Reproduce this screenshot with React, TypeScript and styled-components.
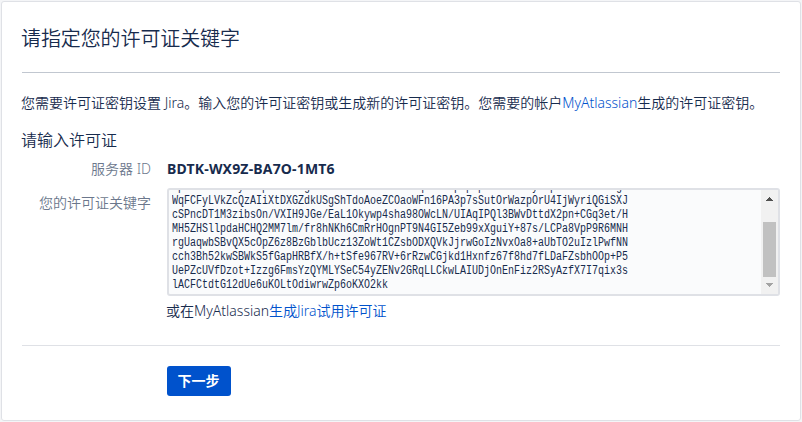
import React from 'react';
import styled, { createGlobalStyle } from 'styled-components';

const GlobalStyle = createGlobalStyle`
  * { box-sizing: border-box; }
  body {
    margin: 0;
    background: #f4f5f7;
    color: #172b4d;
    font: 14px/20px "Noto Sans", "Noto Sans CJK SC", sans-serif;
    overflow: hidden;
  }
`;

const Card = styled.main`
  width: 800px;
  height: 420px;
  margin: 1px;
  padding: 0 20px;
  background: #fff;
  border: 1px solid #dfe1e6;
  border-radius: 3px;
`;

const Header = styled.header`
  height: 71px;
  padding-top: 23px;
  border-bottom: 1px solid #c1c7d0;
`;

const Title = styled.h1`
  margin: 0 0 0 -1px;
  font-size: 20px;
  line-height: 28px;
  font-weight: 350;
  letter-spacing: -0.1px;
`;

const Intro = styled.p`
  margin: 20px 0 0 -1px;
  white-space: nowrap;
  font-weight: 350;
`;

const Subtitle = styled.h2`
  margin: 17px 0 0 -1px;
  font-size: 16px;
  line-height: 20px;
  font-weight: 350;
`;

const Field = styled.div<{ $gap: number }>`
  display: grid;
  grid-template-columns: 129px 613px;
  column-gap: 16px;
  margin-top: ${(p) => p.$gap}px;
`;

const Label = styled.label<{ $offset?: number }>`
  padding-top: ${(p) => p.$offset ?? 0}px;
  text-align: right;
  color: #6b778c;
  font-weight: 350;
`;

const ServerId = styled.strong`
  font-weight: 700;
  letter-spacing: 0.18px;
`;

const KeyBox = styled.div`
  display: flex;
  height: 108px;
  border: 2px solid #dfe1e6;
  border-radius: 3px;
  background: #fafbfc;
  overflow: hidden;
`;

const KeyViewport = styled.div`
  flex: 1;
  min-width: 0;
  height: 104px;
  padding-left: 3px;
  overflow: hidden;
`;

const KeyText = styled.pre`
  margin: -10px 0 0;
  font: 12px/14px "Liberation Mono", monospace;
  transform: scaleX(0.8332);
  transform-origin: 0 0;
`;

const Scrollbar = styled.div`
  display: flex;
  flex-direction: column;
  align-items: center;
  width: 17px;
  background: #f1f1f1;
`;

const Arrow = styled.svg`
  display: block;
  width: 17px;
  height: 17px;
`;

const Thumb = styled.div`
  width: 13px;
  height: 55px;
  margin: 15px 0 0;
  background: #c1c1c1;
`;

const Hint = styled.div`
  margin: 5px 0 0 -1px;
  font-weight: 350;
`;

const Link = styled.a`
  color: #0052cc;
  text-decoration: none;
`;

const Actions = styled.footer`
  margin-top: 24px;
  padding: 20px 0 0 145px;
  border-top: 1px solid #dfe1e6;
`;

const Button = styled.button`
  display: block;
  width: 64px;
  height: 30px;
  padding: 0 1px 0 0;
  border: 0;
  border-radius: 3px;
  background: #0052cc;
  color: #fff;
  font: 700 14px/30px "Noto Sans", "Noto Sans CJK SC", sans-serif;
`;

const licenseKey = [
  'SpKfR2mXHbTyc7WpLhDk1BgN4vZsE0uTxMrA3KdoRqTnWhBpFpUp5ZcLh8XkyVtpMs2HnrdDv6gw',
  'WqFCFyLVkZcQzAIiXtDXGZdkUSgShTdoAoeZCOaoWFn16PA3p7sSutOrWazpOrU4IjWyriQGiSXJ',
  'cSPncDT1M3zibsOn/VXIH9JGe/EaL1Okywp4sha98OWcLN/UIAqIPQl3BWvDttdX2pn+CGq3et/H',
  'MH5ZHSllpdaHCHQ2MM7lm/fr8hNKh6CmRrHOgnPT9N4GI5Zeb99xXguiY+87s/LCPa8VpP9R6MNH',
  'rgUaqwbSBvQX5cOpZ6z8BzGblbUcz13ZoWt1CZsbODXQVkJjrwGoIzNvxOa8+aUbTO2uIzlPwfNN',
  'cch3Bh52kwSBWkS5fGapHRBfX/h+tSfe967RV+6rRzwCGjkd1Hxnfz67f8hd7fLDaFZsbhOOp+P5',
  'UePZcUVfDzot+Izzg6FmsYzQYMLYSeC54yZENv2GRqLLCkwLAIUDjOnEnFiz2RSyAzfX7I7qix3s',
  'lACFCtdtG12dUe6uKOLtOdiwrwZp6oKXO2kk',
].join('\n');

export default function App() {
  return (
    <>
      <GlobalStyle />
      <Card>
        <Header>
          <Title>请指定您的许可证关键字</Title>
        </Header>
        <Intro>
          您需要许可证密钥设置 Jira。输入您的许可证密钥或生成新的许可证密钥。您需要的帐户
          <Link>MyAtlassian</Link>生成的许可证密钥。
        </Intro>
        <Subtitle>请输入许可证</Subtitle>
        <Field $gap={9}>
          <Label>服务器 ID</Label>
          <ServerId>BDTK-WX9Z-BA7O-1MT6</ServerId>
        </Field>
        <Field $gap={9}>
          <Label $offset={5}>您的许可证关键字</Label>
          <div>
            <KeyBox>
              <KeyViewport>
                <KeyText>{licenseKey}</KeyText>
              </KeyViewport>
              <Scrollbar>
                <Arrow viewBox="0 0 17 17" shapeRendering="crispEdges">
                  <path d="M8 7h1v1h1v1h1v1h1v1H5v-1h1V9h1V8h1z" fill="#505050" />
                </Arrow>
                <Thumb />
                <Arrow viewBox="0 0 17 17" shapeRendering="crispEdges">
                  <path d="M5 6h7v1h-1v1h-1v1H9v1H8V9H7V8H6V7H5z" fill="#a3a3a3" />
                </Arrow>
              </Scrollbar>
            </KeyBox>
            <Hint>
              或在MyAtlassian<Link>生成Jira试用许可证</Link>
            </Hint>
          </div>
        </Field>
        <Actions>
          <Button>下一步</Button>
        </Actions>
      </Card>
    </>
  );
}
